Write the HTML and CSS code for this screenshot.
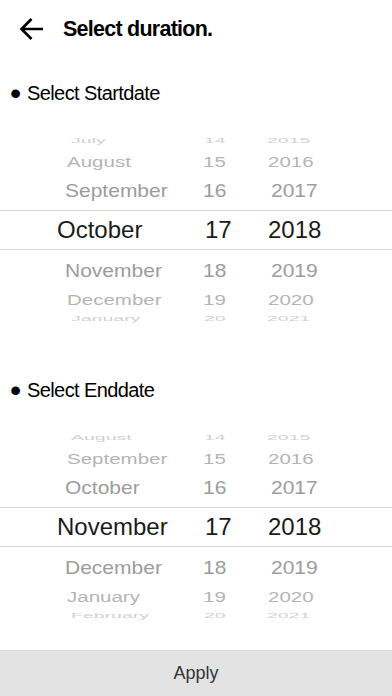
FILE: index.html
```html
<!DOCTYPE html>
<html lang="en">
<head>
<meta charset="utf-8">
<title>Select duration.</title>
<link rel="stylesheet" href="styles.css">
</head>
<body>
<div class="screen">
  <header class="topbar">
    <span class="back" aria-label="Back">
      <svg width="26" height="24" viewBox="0 0 26 24"><path d="M2.5 12H24M12.5 2L2.5 12L12.5 22" fill="none" stroke="#000" stroke-width="2.7" stroke-linecap="butt" stroke-linejoin="miter"/></svg>
    </span>
    <h1 class="title">Select duration.</h1>
  </header>

  <main class="content">
    <p class="label label-start"><span class="bullet">•</span>Select Startdate</p>
    <div class="picker">
      <div class="row r3 up"><span class="m">July</span><span class="d">14</span><span class="y">2015</span></div>
      <div class="row r2 up"><span class="m">August</span><span class="d">15</span><span class="y">2016</span></div>
      <div class="row r1"><span class="m">September</span><span class="d">16</span><span class="y">2017</span></div>
      <div class="row r0"><span class="m">October</span><span class="d">17</span><span class="y">2018</span></div>
      <div class="row r1"><span class="m">November</span><span class="d">18</span><span class="y">2019</span></div>
      <div class="row r2"><span class="m">December</span><span class="d">19</span><span class="y">2020</span></div>
      <div class="row r3"><span class="m">January</span><span class="d">20</span><span class="y">2021</span></div>
    </div>

    <p class="label label-end"><span class="bullet">•</span>Select Enddate</p>
    <div class="picker">
      <div class="row r3 up"><span class="m">August</span><span class="d">14</span><span class="y">2015</span></div>
      <div class="row r2 up"><span class="m">September</span><span class="d">15</span><span class="y">2016</span></div>
      <div class="row r1"><span class="m">October</span><span class="d">16</span><span class="y">2017</span></div>
      <div class="row r0"><span class="m">November</span><span class="d">17</span><span class="y">2018</span></div>
      <div class="row r1"><span class="m">December</span><span class="d">18</span><span class="y">2019</span></div>
      <div class="row r2"><span class="m">January</span><span class="d">19</span><span class="y">2020</span></div>
      <div class="row r3"><span class="m">February</span><span class="d">20</span><span class="y">2021</span></div>
    </div>
  </main>

  <button class="apply" type="button">Apply</button>
</div>
</body>
</html>
```

FILE: styles.css
```css
* { box-sizing: border-box; }

html, body {
  margin: 0;
  padding: 0;
  background: #ffffff;
}

body {
  font-family: "Liberation Sans", Arial, sans-serif;
  color: #000;
}

.screen {
  display: flex;
  flex-direction: column;
  min-height: 696px;
  height: 100vh;
}

.topbar {
  display: flex;
  align-items: center;
  height: 58px;
  padding-left: 19px;
}

.back {
  display: flex;
  width: 26px;
  height: 24px;
  margin-right: 18px;
}

.title {
  margin: 0;
  font-size: 21.5px;
  letter-spacing: -0.75px;
  font-weight: bold;
  line-height: 24px;
  color: #000;
}

.content {
  display: flex;
  flex-direction: column;
}

.label {
  margin: 0;
  display: flex;
  align-items: center;
  height: 24px;
  padding-left: 10px;
  font-size: 20px;
  letter-spacing: -0.6px;
  color: #000;
}

.label-start { margin-top: 23px; }
.label-end { margin-top: 48px; }

.bullet {
  font-size: 32px;
  line-height: 24px;
  width: 17px;
  letter-spacing: 0;
}

.picker {
  display: flex;
  flex-direction: column;
  margin-top: 25px;
  height: 200px;
}

.row {
  display: grid;
  grid-template-columns: 200px 66px 1fr;
  align-items: center;
  width: 100%;
}

.row span {
  display: block;
  line-height: 1;
  white-space: nowrap;
}

.r0 {
  height: 40px;
  border-top: 1px solid #d5d5d5;
  border-bottom: 1px solid #d5d5d5;
  font-size: 24px;
  color: #1b1b1b;
}
.r0 .m { padding-left: 57px; }
.r0 .d { padding-left: 5px; }
.r0 .y { padding-left: 2px; }

.r1 {
  height: 40px;
  font-size: 21px;
  color: #9c9c9c;
}
.r1 span { transform: scaleY(0.9); }
.r1 .m { padding-left: 65px; }
.r1 .d { padding-left: 3px; }
.r1 .y { padding-left: 5px; }

.r2 {
  height: 18px;
  font-size: 20.5px;
  color: #b4b4b4;
}
.r2 span { transform: scaleY(0.7); }
.r2 .m { padding-left: 67px; }
.r2 .d { padding-left: 3px; }
.r2 .y { padding-left: 2px; }

.r3 {
  height: 22px;
  font-size: 19.5px;
  color: #d0d0d0;
}
.r3 span { transform: scaleY(0.38); }
.r3 .m { padding-left: 71px; }
.r3 .d { padding-left: 4px; }
.r3 .y { padding-left: 1px; }

.apply {
  margin-top: auto;
  height: 46px;
  width: 100%;
  border: 0;
  border-top: 1px solid #dcdcdc;
  background: #e3e3e3;
  font-family: "Liberation Sans", Arial, sans-serif;
  font-size: 18px;
  color: #333333;
  padding: 0;
}
```
